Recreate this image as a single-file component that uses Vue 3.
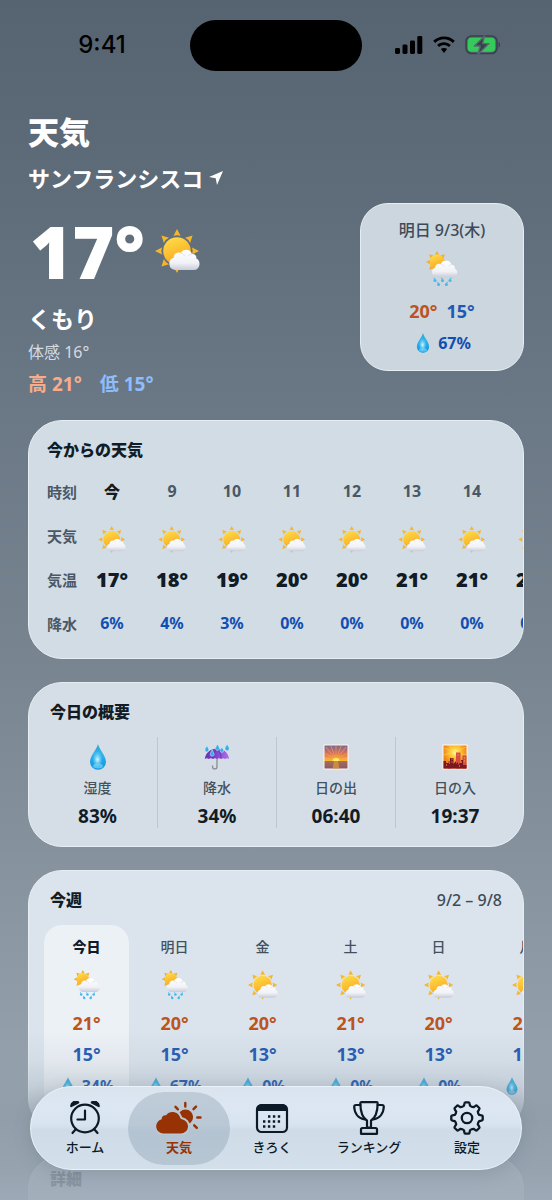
<script setup>
import { ref } from 'vue'

const hours = [
  { time: '今', temp: 17, rain: 6, now: true },
  { time: '9', temp: 18, rain: 4 },
  { time: '10', temp: 19, rain: 3 },
  { time: '11', temp: 20, rain: 0 },
  { time: '12', temp: 20, rain: 0 },
  { time: '13', temp: 21, rain: 0 },
  { time: '14', temp: 21, rain: 0 },
  { time: '15', temp: 21, rain: 0 },
]

const summary = [
  { icon: 'drop', label: '湿度', value: '83%' },
  { icon: 'umbrella', label: '降水', value: '34%' },
  { icon: 'sunrise', label: '日の出', value: '06:40' },
  { icon: 'sunset', label: '日の入', value: '19:37' },
]

const week = [
  { day: '今日', icon: 'rain', high: 21, low: 15, rain: 34, today: true },
  { day: '明日', icon: 'rain', high: 20, low: 15, rain: 67 },
  { day: '金', icon: 'partly', high: 20, low: 13, rain: 0 },
  { day: '土', icon: 'partly', high: 21, low: 13, rain: 0 },
  { day: '日', icon: 'partly', high: 20, low: 13, rain: 0 },
  { day: '月', icon: 'partly', high: 21, low: 13, rain: 0 },
]

const tabs = [
  { id: 'home', label: 'ホーム' },
  { id: 'weather', label: '天気' },
  { id: 'log', label: 'きろく' },
  { id: 'ranking', label: 'ランキング' },
  { id: 'settings', label: '設定' },
]
const active = ref('weather')

const rays = [0, 45, 90, 135, 180, 225, 270, 315]

// Eight-toothed gear outline
function gearPath(cx, cy, outer, inner) {
  const at = (r, deg) => {
    const t = (deg * Math.PI) / 180
    return `${(cx + r * Math.sin(t)).toFixed(2)} ${(cy - r * Math.cos(t)).toFixed(2)}`
  }
  let d = `M${at(inner, -14)}`
  for (let a = 0; a < 360; a += 45) {
    d += `L${at(outer - 1, a - 10)}Q${at(outer, a - 9)} ${at(outer, a - 6)}L${at(outer, a + 6)}`
    d += `Q${at(outer, a + 9)} ${at(outer - 1, a + 10)}L${at(inner, a + 14)}`
    d += `Q${at(inner - 0.8, a + 22.5)} ${at(inner, a + 31)}`
  }
  return `${d}Z`
}
const gear = gearPath(17, 17, 15.8, 12.6)
</script>

<template>
  <div class="screen">
    <!-- shared weather glyphs -->
    <svg class="sprite" aria-hidden="true">
      <defs>
        <linearGradient id="g-sun" x1="0" y1="0" x2="0.4" y2="1">
          <stop offset="0" stop-color="#ffe04a" />
          <stop offset="1" stop-color="#f9a921" />
        </linearGradient>
        <linearGradient id="g-cloud" x1="0" y1="0" x2="0" y2="1">
          <stop offset="0" stop-color="#ffffff" />
          <stop offset="0.65" stop-color="#f1f2f7" />
          <stop offset="1" stop-color="#c9ccd8" />
        </linearGradient>
        <linearGradient id="g-drop" x1="0" y1="0" x2="0" y2="1">
          <stop offset="0" stop-color="#2c9ccf" />
          <stop offset="0.35" stop-color="#35b6ec" />
          <stop offset="1" stop-color="#0f93e0" />
        </linearGradient>
        <radialGradient id="g-shine" cx="0.5" cy="0.5" r="0.5">
          <stop offset="0" stop-color="#d8f8ff" />
          <stop offset="1" stop-color="#8ee2fb" stop-opacity="0" />
        </radialGradient>
        <linearGradient id="g-umb" x1="0" y1="0" x2="1" y2="0">
          <stop offset="0" stop-color="#6a2fb4" />
          <stop offset="0.5" stop-color="#7d49cf" />
          <stop offset="1" stop-color="#b56ff2" />
        </linearGradient>
        <linearGradient id="g-rise" x1="0" y1="0" x2="0" y2="1">
          <stop offset="0" stop-color="#7d6790" />
          <stop offset="0.35" stop-color="#d9705b" />
          <stop offset="0.66" stop-color="#ffb52e" />
          <stop offset="0.67" stop-color="#a96d5c" />
          <stop offset="1" stop-color="#8b5b62" />
        </linearGradient>
        <radialGradient id="g-set" cx="0.5" cy="0.3" r="0.8">
          <stop offset="0" stop-color="#fffbd0" />
          <stop offset="0.2" stop-color="#ffd83b" />
          <stop offset="0.6" stop-color="#f58a1c" />
          <stop offset="1" stop-color="#d84c14" />
        </radialGradient>
      </defs>
      <symbol id="i-partly" viewBox="0 0 45 44">
        <path
          v-for="r in rays"
          :key="r"
          d="M22 0L25.600 7Q22 5.600 18.400 7Z"
          :transform="`rotate(${r} 22 22)`"
          fill="#f6b62c"
        />
        <circle cx="22" cy="22" r="13.8" fill="url(#g-sun)" />
        <path
          d="M20 41a6.300 6.300 0 0 1-1.200-12.300c-.6-3.600 3.600-6.200 6.800-4.600 2.300-4.800 9.800-4.400 11.400.9 3-.3 4.800 2 4.300 4.500 5 1.600 4 11.500-2 11.500Z"
          fill="url(#g-cloud)"
        />
        <path d="M26 24.3c2 .3 3.3 1.4 3.8 3M37 25c-1.6.2-2.7.8-3.4 2" fill="none" stroke="#d9dbe4" stroke-width="0.8" />
      </symbol>
      <symbol id="i-rain" viewBox="0 0 32 36">
        <path
          v-for="r in rays"
          :key="r"
          d="M11 0L13.300 4.200Q11 3.200 8.700 4.200Z"
          :transform="`rotate(${r} 11 11)`"
          fill="#f3ae2c"
        />
        <circle cx="11" cy="11" r="7.400" fill="url(#g-sun)" />
        <path
          d="M10.500 26.300a5 5 0 0 1-1.400-9.600c0-3 3-4.800 5.700-3.600 1.800-4.900 9.400-4.600 10.700.6 2.600.1 3.800 1.900 3.400 4C33 19.600 31.500 26.300 26.700 26.300Z"
          fill="url(#g-cloud)"
        />
        <path d="M14.600 13.200c1.800.1 3 1 3.400 2.600M25.500 13.700c-1.500.1-2.600.8-3.200 2" fill="none" stroke="#d9dbe4" stroke-width="0.7" />
        <g fill="#49b7e8">
          <circle cx="9" cy="29.400" r="1.500" />
          <circle cx="16.500" cy="29.400" r="1.500" />
          <circle cx="24" cy="29.400" r="1.500" />
          <circle cx="12.600" cy="33.600" r="1.500" />
          <circle cx="20.400" cy="33.600" r="1.500" />
          <path d="M7.500 28l.4-1.600 1.600 1.700zM15 28l.4-1.600 1.600 1.700zM25.500 28l-.4-1.600-1.600 1.700zM11.100 32.200l.4-1.600 1.600 1.700zM21.900 32.200l-.4-1.600-1.600 1.700z" />
        </g>
      </symbol>
      <symbol id="i-drop" viewBox="0 0 26 26">
        <path d="M13 0c.9 5.200 8 11.600 8 17.800a8 8 0 0 1-16 0C5 11.600 12.100 5.200 13 0Z" fill="url(#g-drop)" />
        <ellipse cx="12.500" cy="15.500" rx="5" ry="8" fill="url(#g-shine)" />
        <ellipse cx="13" cy="22" rx="5" ry="2.500" fill="#7fe0fb" opacity="0.6" />
      </symbol>
      <symbol id="i-umbrella" viewBox="0 0 27 27">
        <path d="M13.500 14v9.500a2.300 2.300 0 0 1-4.600 0v-.8" fill="none" stroke="#8c8f98" stroke-width="1.400" stroke-linecap="round" />
        <path d="M.8 15.500C2 8.500 7.600 4.800 13.500 4.800s11.500 3.700 12.700 10.700c-1.400-1-2.800-1-4.200 0-1.400-1-3-1-4.300 0-1.300-1-2.900-1-4.200 0-1.300-1-2.900-1-4.200 0-1.300-1-2.900-1-4.300 0-1.400-1-2.800-1-4.200 0Z" fill="url(#g-umb)" />
        <path d="M13.500 5c-3 2.500-4.200 6-4.200 10M13.500 5c3 2.500 4.200 6 4.200 10" fill="none" stroke="#5a2aa0" stroke-width="0.700" />
        <g fill="#38aee4" stroke="#cdf3ff" stroke-width="0.500">
          <path d="M3 1.500c.5 1.700 2 3 2 4.700a2 2 0 0 1-4 0C1 4.500 2.500 3.200 3 1.500Z" />
          <path d="M14 0c.5 1.700 2 3 2 4.700a2 2 0 0 1-4 0C12 3 13.500 1.700 14 0Z" />
          <path d="M24 0c.5 1.700 2.200 3 2.200 4.900a2.200 2.200 0 0 1-4.400 0C21.800 3 23.500 1.700 24 0Z" />
          <path d="M8.500 6c.5 1.700 2 3 2 4.700a2 2 0 0 1-4 0c0-1.700 1.500-3 2-4.700Z" />
          <path d="M18.600 3c.5 1.500 1.800 2.500 1.800 4a1.800 1.800 0 0 1-3.600 0c0-1.500 1.300-2.500 1.800-4Z" />
        </g>
      </symbol>
      <symbol id="i-sunrise" viewBox="0 0 26 26">
        <rect width="26" height="26" rx="1" fill="#f8f5f3" stroke="#cfd2d8" stroke-width="0.600" />
        <rect x="1.500" y="1.500" width="23" height="23" fill="url(#g-rise)" />
        <path
          d="M13 16L3 3M13 16L8 2M13 16V2M13 16l5-14M13 16L23 3M13 16L2 9M13 16l11-7M13 16L2 14M13 16l11-2"
          stroke="#ffb347"
          stroke-width="0.900"
          opacity="0.600"
        />
        <path d="M9.500 17a3.500 3 0 0 1 7 0Z" fill="#ffee62" />
        <path d="M11 17h4l1.500 7.500h-7Z" fill="#e39a34" opacity="0.700" />
      </symbol>
      <symbol id="i-sunset" viewBox="0 0 26 26">
        <rect width="26" height="26" rx="1" fill="#fdf8ee" stroke="#cfd2d8" stroke-width="0.600" />
        <rect x="1.500" y="1.500" width="23" height="23" fill="url(#g-set)" />
        <path d="M13 8L2 4M13 8L7 2M13 8l5-6M13 8l11-5M13 8L2 11M13 8l11 3" stroke="#ffe36a" stroke-width="0.700" opacity="0.700" />
        <path d="M14 8.500h4.500v16H14zM20.500 11.500h4v13h-4zM6 17h3v7.500H6z" fill="#d64f45" />
        <path d="M1.500 17H4v2h3v1h1v-6h3.500v10.500h-10zM11.500 20l2.500-3v3l2-2v6.500h-4.500zM16 21l2-2h1v-3h2v5h3.500v3.500H16z" fill="#7c1822" />
        <path d="M4 21h1M9.500 15h1M9.500 18h1M15.500 11h1M19 18h1M22 14h1M22 17h1M17 22h1" stroke="#ffab4a" stroke-width="1" />
      </symbol>
    </svg>

    <header class="status">
      <time class="clock">9:41</time>
      <span class="island"></span>
      <div class="indicators">
        <svg width="28" height="18" viewBox="0 0 28 18">
          <rect x="0" y="12" width="5" height="6" rx="1.400" />
          <rect x="7.500" y="8.500" width="5" height="9.500" rx="1.400" />
          <rect x="15" y="4.500" width="5" height="13.500" rx="1.400" />
          <rect x="22.300" y="0" width="5" height="18" rx="1.400" />
        </svg>
        <svg width="22" height="18" viewBox="0 0 22 18">
          <path d="M11 0.500C6.800.500 3 2.100.2 4.800l2 2.100a12.700 12.700 0 0 1 17.600 0l2-2.100A15.600 15.600 0 0 0 11 .5Z" />
          <path d="M11 6.200c-2.700 0-5 1-6.900 2.700l2 2.100a7.100 7.100 0 0 1 9.800 0l2-2.100A10 10 0 0 0 11 6.200Z" />
          <path d="M11 11.900c-1.300 0-2.300.400-3.100 1.200L11 17l3.100-3.900c-.8-.8-1.800-1.200-3.100-1.200Z" />
        </svg>
        <svg width="36" height="20" viewBox="0 0 36 20">
          <rect x="1" y="1" width="31" height="17.500" rx="5.500" fill="none" stroke="#38424c" stroke-width="1.600" />
          <path d="M33.600 7v5.600c2-.7 2-4.900 0-5.600Z" fill="#38424c" />
          <rect x="2.800" y="2.800" width="27.400" height="14" rx="3.800" fill="#35cb5b" />
          <path d="M19.600 1L9.400 11h5.800l-2.400 8.500L24 8.600h-6.400Z" fill="#38424c" stroke="#5a6773" stroke-width="1.400" stroke-linejoin="round" />
        </svg>
      </div>
    </header>

    <main class="scroll">
      <h1>天気</h1>
      <p class="place">
        サンフランシスコ
        <svg width="14" height="14" viewBox="0 0 14 14"><path d="M14 0L8 14 6.700 7.300 0 6Z" fill="#fff" /></svg>
      </p>

      <section class="hero">
        <div class="current">
          <div class="big">
            <span>17°</span>
            <svg width="45" height="44"><use href="#i-partly" /></svg>
          </div>
          <p class="condition">くもり</p>
          <p class="feels">体感 16°</p>
          <p class="range"><span class="range-high">高 21°</span><span class="range-low">低 15°</span></p>
        </div>
        <article class="card tomorrow">
          <h2>明日 9/3(木)</h2>
          <svg width="32" height="36"><use href="#i-rain" /></svg>
          <p class="temps"><span class="high">20°</span><span class="low">15°</span></p>
          <p class="chance"><svg width="20" height="20"><use href="#i-drop" /></svg>67%</p>
        </article>
      </section>

      <section class="card hourly">
        <h2>今からの天気</h2>
        <table>
          <tbody>
            <tr>
              <th scope="row">時刻</th>
              <td v-for="h in hours" :key="h.time" class="hour" :class="{ now: h.now }">{{ h.time }}</td>
            </tr>
            <tr>
              <th scope="row">天気</th>
              <td v-for="h in hours" :key="h.time" class="glyph">
                <svg width="28" height="27"><use href="#i-partly" /></svg>
              </td>
            </tr>
            <tr>
              <th scope="row">気温</th>
              <td v-for="h in hours" :key="h.time" class="temp">{{ h.temp }}°</td>
            </tr>
            <tr>
              <th scope="row">降水</th>
              <td v-for="h in hours" :key="h.time" class="pop">{{ h.rain }}%</td>
            </tr>
          </tbody>
        </table>
      </section>

      <section class="card summary">
        <h2>今日の概要</h2>
        <ul>
          <li v-for="s in summary" :key="s.label">
            <svg width="26" height="26"><use :href="`#i-${s.icon}`" /></svg>
            <span class="label">{{ s.label }}</span>
            <strong>{{ s.value }}</strong>
          </li>
        </ul>
      </section>

      <section class="card weekly">
        <div class="weekly-head">
          <h2>今週</h2>
          <span>9/2 – 9/8</span>
        </div>
        <ul>
          <li v-for="d in week" :key="d.day" :class="{ today: d.today }">
            <span class="day">{{ d.day }}</span>
            <svg width="30" height="30"><use :href="`#i-${d.icon}`" /></svg>
            <span class="high">{{ d.high }}°</span>
            <span class="low">{{ d.low }}°</span>
            <span class="chance"><svg width="18" height="18"><use href="#i-drop" /></svg>{{ d.rain }}%</span>
          </li>
        </ul>
      </section>

      <section class="card detail">
        <h2>詳細</h2>
      </section>
    </main>

    <div class="fade"></div>

    <nav class="tabbar">
      <button
        v-for="t in tabs"
        :key="t.id"
        type="button"
        :class="{ active: active === t.id }"
        @click="active = t.id"
      >
        <svg v-if="t.id === 'home'" width="32" height="34" viewBox="0 0 32 34" fill="none" stroke="currentColor" stroke-width="2.200" stroke-linecap="round" stroke-linejoin="round">
          <circle cx="16" cy="17.500" r="13.800" />
          <path d="M16 9.500v9H8.500M6.500 28.500l-3 3.500M25.500 28.500l3 3.500" />
          <path d="M2.200 5a4.500 4.500 0 0 1 7-3.600ZM29.800 5a4.500 4.500 0 0 0-7-3.600Z" fill="currentColor" />
        </svg>
        <svg v-else-if="t.id === 'weather'" class="cloud-sun" width="46" height="34" viewBox="0 0 46 34">
          <circle cx="29.500" cy="16" r="7.600" fill="currentColor" />
          <path
            class="cloud"
            d="M7.500 32.500a7.200 7.200 0 0 1-1.800-14.200C5.600 15.500 7.600 13.800 10.200 14.200c3.500-5.300 12.300-4 14 2.600.2.900.8 1.300 1.800 1.400A7.200 7.200 0 0 1 24.800 32.500Z"
          />
          <path d="M29.300 2v3.500M19.500 5.800l2.400 2.500M40 5.600l-2.500 2.600M41.300 16.500h3.200M38.200 24.300l2.600 2.600" fill="none" stroke="currentColor" stroke-width="2.400" stroke-linecap="round" />
        </svg>
        <svg v-else-if="t.id === 'log'" width="34" height="34" viewBox="0 0 34 34">
          <rect x="2" y="4" width="30" height="27" rx="4.500" fill="none" stroke="currentColor" stroke-width="2.200" />
          <path d="M2 10V8a5 5 0 0 1 5-5h20a5 5 0 0 1 5 5v2Z" fill="currentColor" />
          <path d="M13 15.500h14M8 20.500h19M8 25.500h14" fill="none" stroke="currentColor" stroke-width="2.400" stroke-dasharray="2.400 2.500" />
        </svg>
        <svg v-else-if="t.id === 'ranking'" width="32" height="34" viewBox="0 0 32 34" fill="none" stroke="currentColor" stroke-width="2.200" stroke-linecap="round" stroke-linejoin="round">
          <path d="M8.500 1.200h15c.8 0 1.200.5 1.200 1.200C24.500 11 22.500 17 18 19.500v7.200h-4v-7.200C9.500 17 7.500 11 7.300 2.400c0-.7.400-1.200 1.200-1.200Z" />
          <path d="M7.400 4H3C1.800 4 1.200 4.700 1.200 5.800 1.400 12.500 5.500 17.500 12 18.500M24.600 4H29c1.200 0 1.800.7 1.800 1.800-.2 6.700-4.300 11.700-10.800 12.700" />
          <path d="M9.500 27h13c1 0 1.500.6 1.500 1.500v4.300H8v-4.300c0-.9.500-1.500 1.500-1.500Z" />
        </svg>
        <svg v-else width="34" height="34" viewBox="0 0 34 34" fill="none" stroke="currentColor" stroke-width="2.300" stroke-linejoin="round">
          <path :d="gear" />
          <circle cx="17" cy="17" r="5.200" />
        </svg>
        <span>{{ t.label }}</span>
      </button>
    </nav>
  </div>
</template>

<style>
body {
  margin: 0;
}
</style>

<style scoped>
.screen {
  position: relative;
  display: flex;
  flex-direction: column;
  height: 100vh;
  overflow: hidden;
  background: linear-gradient(#566471 0%, #5f6c79 17%, #6b7885 35%, #788591 55%, #87949f 73%, #95a2ae 90%, #9ca9b6 100%);
  color: #111c26;
  font-family: 'Noto Sans', 'Noto Sans CJK JP', sans-serif;
  box-sizing: border-box;
}
.screen *,
.screen *::before {
  box-sizing: border-box;
}
.sprite {
  position: absolute;
  width: 0;
  height: 0;
}
h1, h2, p, ul {
  margin: 0;
  padding: 0;
  list-style: none;
}
svg {
  flex-shrink: 0;
}

/* status bar */
.status {
  display: grid;
  grid-template-columns: 1fr 172px 1fr;
  align-items: center;
  height: 90px;
  flex-shrink: 0;
}
.clock {
  padding-left: 14px;
  text-align: center;
  font: 500 24px/30px Inter, sans-serif;
  color: #000;
}
.island {
  height: 51px;
  border-radius: 26px;
  background: #000;
}
.indicators {
  display: flex;
  align-items: center;
  gap: 10px;
  padding-left: 33px;
}

.scroll {
  flex: 1;
  min-height: 0;
  overflow-y: auto;
  scrollbar-width: none;
  padding: 22px 28px 0;
}
h1 {
  font-size: 31px;
  line-height: 40px;
  font-weight: 900;
  color: #fff;
}
.place {
  display: flex;
  align-items: center;
  gap: 6px;
  margin-top: 11px;
  font-size: 22px;
  line-height: 30px;
  font-weight: 700;
  color: #fff;
}

.hero {
  display: flex;
  justify-content: space-between;
  align-items: flex-start;
  margin: 10px 0 24px;
  color: #fff;
}
.current {
  padding-top: 12px;
}
.big {
  display: flex;
  align-items: center;
  gap: 10px;
  height: 72px;
  padding-left: 2px;
  font: 800 72px/72px 'Open Sans', sans-serif;
}
.condition {
  margin-top: 16px;
  font-size: 23px;
  line-height: 32px;
  font-weight: 700;
}
.feels {
  margin-top: 5px;
  font-size: 16px;
  line-height: 24px;
  color: #d5dbe1;
}
.range {
  display: flex;
  gap: 18px;
  margin-top: 8px;
  font-size: 19px;
  line-height: 24px;
  font-weight: 700;
}
.range-high {
  color: #f7ac8b;
}
.range-low {
  color: #8fbdfb;
}

.card {
  border: 1px solid #e6eef5;
  border-radius: 34px;
  margin-bottom: 23px;
  overflow: hidden;
}
.card h2 {
  font-size: 16px;
  line-height: 24px;
  font-weight: 900;
}
.high {
  color: #bb5420;
}
.low {
  color: #1f59b4;
}

.tomorrow {
  display: flex;
  flex-direction: column;
  align-items: center;
  width: 164px;
  margin: 0;
  padding: 14px 0 15px;
  border-radius: 28px;
  background: #ccd6df;
}
.card.tomorrow h2 {
  font-size: 16px;
  font-weight: 500;
  color: #3d4b58;
}
.tomorrow svg {
  margin-top: 9px;
}
.temps {
  display: flex;
  gap: 9px;
  margin-top: 12px;
  font-size: 18px;
  line-height: 24px;
  font-weight: 700;
}
.chance {
  display: flex;
  align-items: center;
  gap: 5px;
  color: #104fb2;
  font-size: 16px;
  line-height: 24px;
  font-weight: 700;
}
.tomorrow .chance {
  margin-top: 8px;
}
.tomorrow .chance svg {
  margin: 0;
}

.hourly {
  padding: 17px 0 13px 18px;
  background: #d2dce5;
}
.hourly table {
  width: 515px;
  margin-top: 7px;
  table-layout: fixed;
  border-collapse: collapse;
}
.hourly th {
  width: 35px;
  height: 44px;
  padding: 0;
  text-align: left;
  font-size: 15px;
  font-weight: 700;
  color: #4a5865;
  white-space: nowrap;
}
.hourly td {
  width: 60px;
  padding: 0;
  text-align: center;
  font-weight: 700;
}
.hour {
  font-size: 16px;
  color: #4a5865;
}
.hourly .now {
  font-weight: 900;
  color: #111c26;
}
.glyph svg {
  display: block;
  margin: 8px auto 0;
}
.hourly .temp {
  font-family: 'Open Sans', sans-serif;
  font-size: 20px;
  font-weight: 800;
}
.pop {
  font-size: 16px;
  color: #104fb2;
}

.summary {
  padding: 17px 9px 18px;
  background: #d5dee7;
}
.summary h2 {
  padding-left: 12px;
}
.summary ul {
  display: grid;
  grid-template-columns: repeat(4, 1fr);
  margin-top: 13px;
}
.summary li {
  display: flex;
  flex-direction: column;
  align-items: center;
  padding-top: 7px;
}
.summary li + li {
  border-left: 1px solid #bcc6cf;
}
.label {
  margin-top: 8px;
  font-size: 14px;
  line-height: 20px;
  font-weight: 500;
  color: #43515e;
}
.summary strong {
  margin-top: 6px;
  font-size: 19px;
  line-height: 24px;
}

.weekly {
  padding: 17px 0 18px;
  background: #dbe4ed;
}
.weekly-head {
  display: flex;
  justify-content: space-between;
  align-items: center;
  padding: 0 21px;
  font-size: 16px;
  font-weight: 500;
  line-height: 24px;
  color: #3d4b58;
}
.weekly-head h2 {
  color: #111c26;
}
.weekly ul {
  display: flex;
  gap: 3px;
  margin-top: 13px;
  padding-left: 15px;
}
.weekly li {
  display: flex;
  flex: none;
  flex-direction: column;
  align-items: center;
  width: 85px;
  height: 188px;
  padding-top: 10px;
  border-radius: 18px;
  font-size: 18px;
  line-height: 24px;
  font-weight: 700;
}
.weekly .today {
  background: #ecf1f6;
}
.day {
  font-size: 14px;
  font-weight: 500;
  color: #43515e;
}
.today .day {
  font-weight: 900;
  color: #111c26;
}
.weekly li > svg {
  margin-top: 11px;
}
.weekly .high {
  margin-top: 11px;
}
.weekly .low {
  margin-top: 7px;
}
.weekly .chance {
  margin-top: 8px;
  font-size: 16px;
}

.detail {
  height: 200px;
  padding: 11px 21px;
  background: #dbe4ed;
}

/* scroll edge */
.fade {
  position: absolute;
  inset: auto 0 0;
  height: 170px;
  background: linear-gradient(
    rgba(148, 161, 173, 0) 0,
    rgba(142, 155, 167, 0.1) 30px,
    rgba(142, 155, 167, 0.3) 56px,
    rgba(143, 156, 168, 0.72) 86px,
    rgba(150, 163, 175, 0.86) 140px,
    rgba(156, 169, 182, 0.9) 170px
  );
  pointer-events: none;
}

.tabbar {
  position: absolute;
  inset: auto 30px 30px;
  display: grid;
  grid-template-columns: 94fr 94fr 92fr 102fr 94fr;
  padding: 5px 7px 4px;
  border: 1px solid #eaf3fb;
  border-radius: 42px;
  background: linear-gradient(#d9e4ef 0%, #dce7f3 25%, #d8e4ef 45%, #cfdce8 53%, #d3dfea 100%);
  box-shadow: 0 4px 18px rgba(70, 84, 98, 0.2);
}
.tabbar button {
  display: flex;
  flex-direction: column;
  align-items: center;
  gap: 2px;
  margin: 0 -4px;
  padding: 9px 0;
  border: 0;
  border-radius: 37px;
  background: none;
  color: #0c1926;
  font: 500 13px/19px 'Noto Sans CJK JP', sans-serif;
  cursor: pointer;
}
.tabbar .active {
  background: linear-gradient(#bfccd8, #bac8d6 45%, #b3c3d1 55%, #b7c6d3);
  color: #973204;
  font-weight: 700;
}
/* outline in the bar's colour keeps a gap between cloud and sun */
.cloud {
  fill: currentColor;
  stroke: #d8e4ef;
  stroke-width: 4;
  paint-order: stroke;
}
.active .cloud {
  stroke: #bac8d6;
}
</style>
